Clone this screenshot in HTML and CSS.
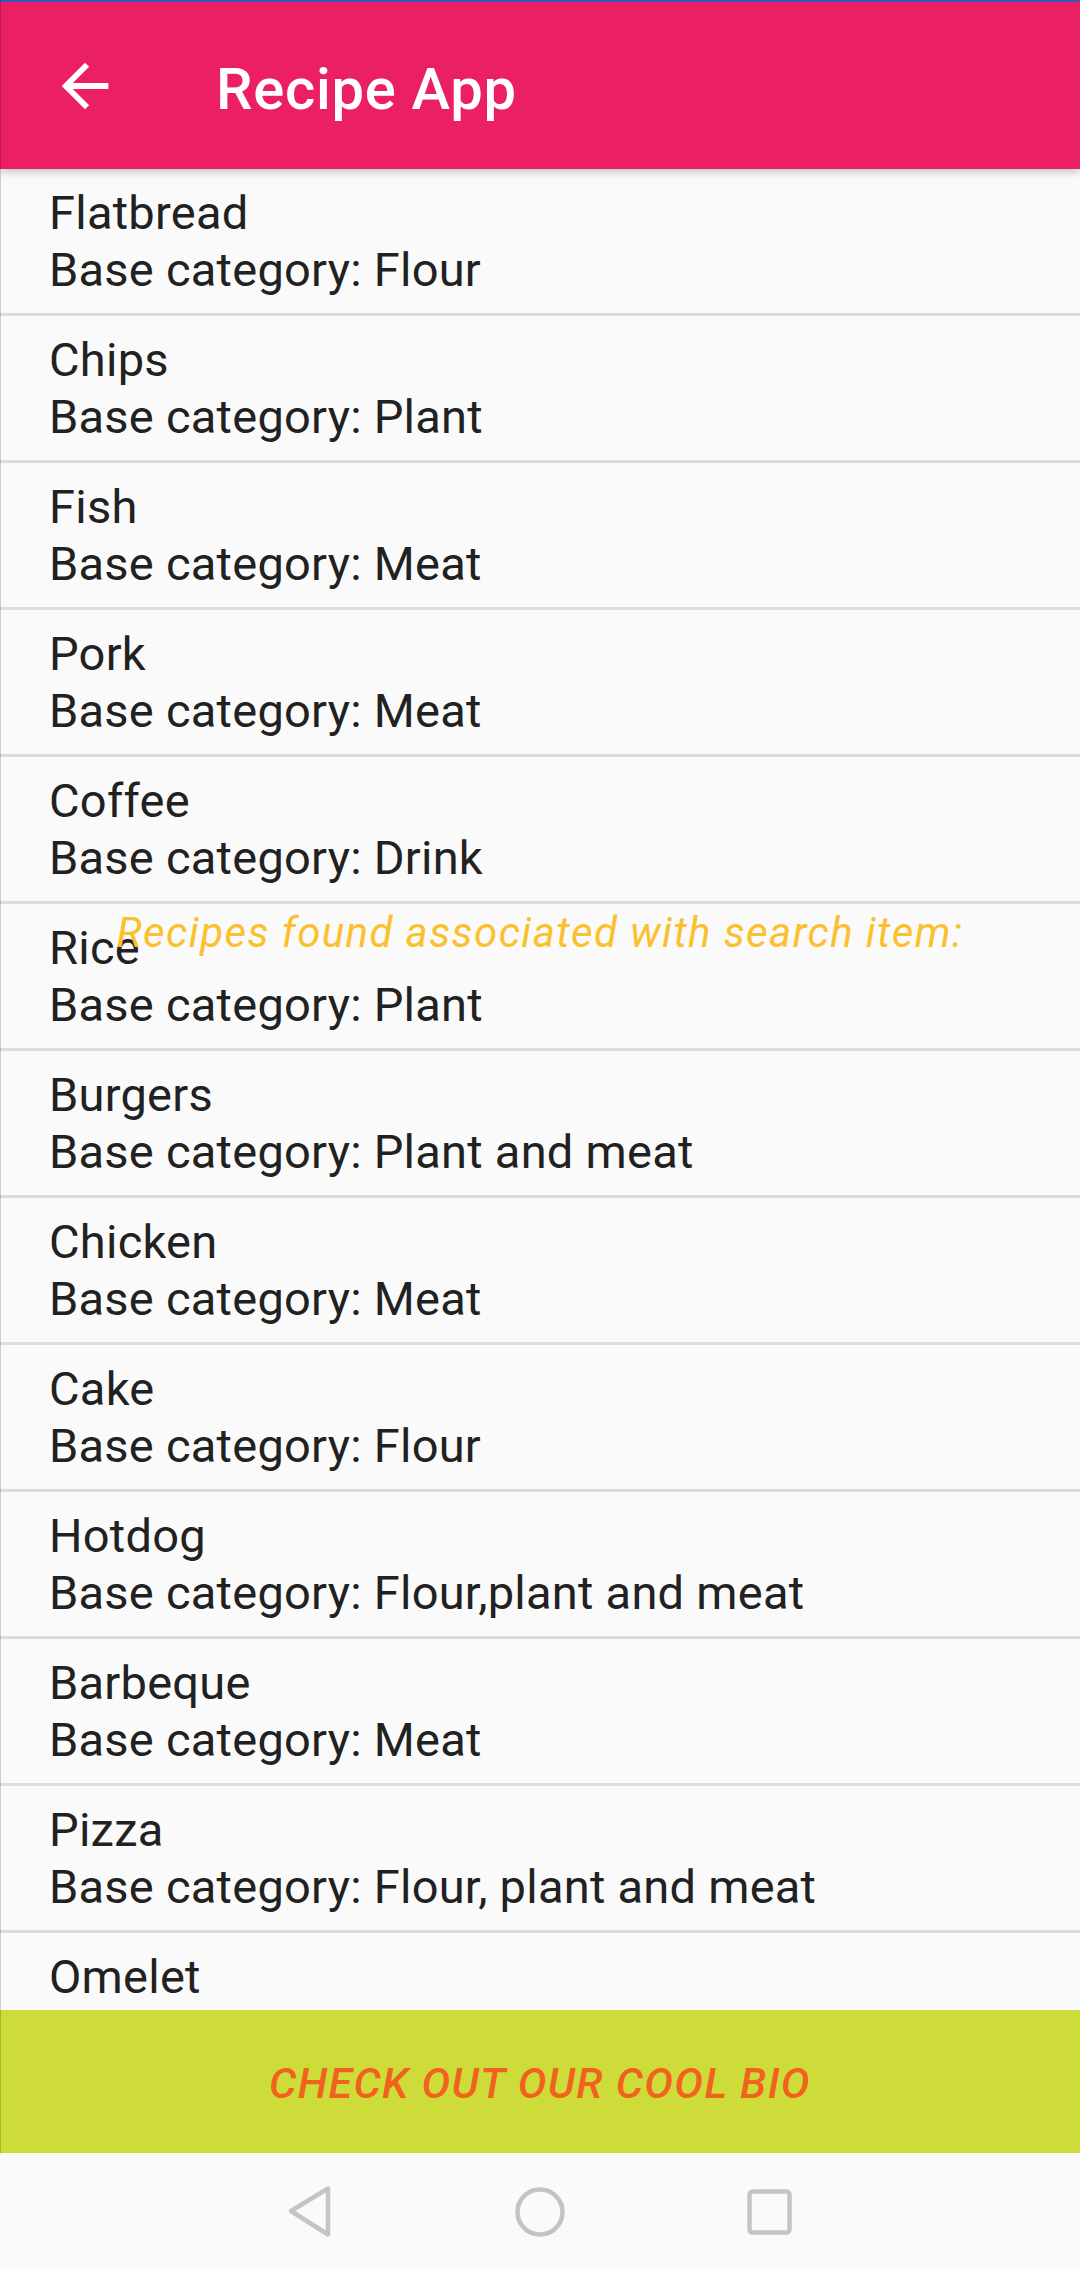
FILE: index.html
```html
<!DOCTYPE html>
<html>
<head>
<meta charset="utf-8">
<link rel="stylesheet" href="styles.css">
</head>
<body>
<div class="screen">
  <header class="appbar">
    <svg class="back" viewBox="0 0 24 24" width="70" height="70"><path fill="#fff" d="M20 11H7.83l5.59-5.59L12 4l-8 8 8 8 1.41-1.41L7.83 13H20v-2z"/></svg>
    <h1 class="title">Recipe App</h1>
  </header>
  <main class="list">
    <div class="row"><div>Flatbread</div><div>Base category: Flour</div></div>
    <div class="row"><div>Chips</div><div>Base category: Plant</div></div>
    <div class="row"><div>Fish</div><div>Base category: Meat</div></div>
    <div class="row"><div>Pork</div><div>Base category: Meat</div></div>
    <div class="row"><div>Coffee</div><div>Base category: Drink</div></div>
    <div class="row"><div>Rice</div><div>Base category: Plant</div></div>
    <div class="row"><div>Burgers</div><div>Base category: Plant and meat</div></div>
    <div class="row"><div>Chicken</div><div>Base category: Meat</div></div>
    <div class="row"><div>Cake</div><div>Base category: Flour</div></div>
    <div class="row"><div>Hotdog</div><div>Base category: Flour,plant and meat</div></div>
    <div class="row"><div>Barbeque</div><div>Base category: Meat</div></div>
    <div class="row"><div>Pizza</div><div>Base category: Flour, plant and meat</div></div>
    <div class="row"><div>Omelet</div><div>Base category: Egg</div></div>
    <div class="notice">Recipes found associated with search item:</div>
  </main>
  <button class="bio">CHECK OUT OUR COOL BIO</button>
  <nav class="navbar">
    <svg width="1080" height="116" viewBox="0 0 1080 116">
      <g fill="none" stroke="#c4c4c4" stroke-width="4.5" stroke-linejoin="round">
        <path d="M291 58 L328 35.5 L328 81.5 Z"/>
        <circle cx="540" cy="59" r="22.5"/>
        <rect x="749.5" y="38.5" width="40" height="41" rx="3"/>
      </g>
    </svg>
  </nav>
</div>
</body>
</html>
```
FILE: styles.css
```css
html, body {
  margin: 0;
  padding: 0;
  background: #fafafa;
}
.screen {
  position: relative;
  width: 1080px;
  height: 2269px;
  display: flex;
  flex-direction: column;
  overflow: hidden;
  font-family: Roboto, "Noto Sans", sans-serif;
}
.screen::after {
  content: "";
  position: absolute;
  left: 0;
  top: 0;
  bottom: 116px;
  width: 1px;
  background: rgba(0, 0, 0, 0.18);
  z-index: 5;
}
.appbar {
  box-sizing: border-box;
  height: 169px;
  flex: none;
  border-top: 2px solid #3f55b8;
  background: #eb1f63;
  display: flex;
  align-items: center;
  padding-left: 50px;
  box-shadow: 0 3px 8px rgba(0, 0, 0, 0.22);
  position: relative;
  z-index: 2;
}
.back {
  flex: none;
  display: block;
}
.title {
  margin: 6px 0 0 96px;
  font-size: 58px;
  font-weight: 500;
  letter-spacing: 0.7px;
  color: #fff;
  line-height: 68px;
}
.list {
  flex: 1;
  position: relative;
  overflow: hidden;
  background: #fafafa;
}
.row {
  box-sizing: border-box;
  height: 147px;
  padding: 16px 45px 0 49px;
  border-bottom: 3px solid #dcdcdc;
  font-size: 47px;
  letter-spacing: 0.25px;
  line-height: 56.5px;
  color: #212121;
}
.notice {
  position: absolute;
  left: 0;
  right: 0;
  top: 739px;
  text-align: center;
  font-size: 42px;
  letter-spacing: 1.4px;
  font-style: italic;
  line-height: 49px;
  color: #fbc02d;
}
.bio {
  flex: none;
  height: 143px;
  border: none;
  margin: 0;
  padding: 2px 0 0;
  background: #cddc39;
  color: #f2621f;
  font-family: Roboto, sans-serif;
  font-size: 43px;
  letter-spacing: 1.3px;
  font-style: italic;
  font-weight: 500;
  text-transform: uppercase;
}
.navbar {
  flex: none;
  height: 116px;
  background: #fafafa;
}
.navbar svg {
  display: block;
}
```
